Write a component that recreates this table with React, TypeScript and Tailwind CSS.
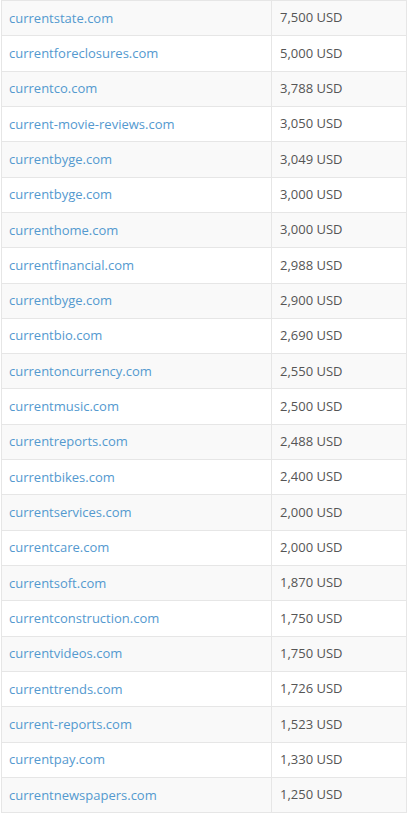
const rows: [string, string][] = [
  ["currentstate.com", "7,500 USD"],
  ["currentforeclosures.com", "5,000 USD"],
  ["currentco.com", "3,788 USD"],
  ["current-movie-reviews.com", "3,050 USD"],
  ["currentbyge.com", "3,049 USD"],
  ["currentbyge.com", "3,000 USD"],
  ["currenthome.com", "3,000 USD"],
  ["currentfinancial.com", "2,988 USD"],
  ["currentbyge.com", "2,900 USD"],
  ["currentbio.com", "2,690 USD"],
  ["currentoncurrency.com", "2,550 USD"],
  ["currentmusic.com", "2,500 USD"],
  ["currentreports.com", "2,488 USD"],
  ["currentbikes.com", "2,400 USD"],
  ["currentservices.com", "2,000 USD"],
  ["currentcare.com", "2,000 USD"],
  ["currentsoft.com", "1,870 USD"],
  ["currentconstruction.com", "1,750 USD"],
  ["currentvideos.com", "1,750 USD"],
  ["currenttrends.com", "1,726 USD"],
  ["current-reports.com", "1,523 USD"],
  ["currentpay.com", "1,330 USD"],
  ["currentnewspapers.com", "1,250 USD"],
];

export default function App() {
  return (
    <div className="w-[408px] h-[813px] overflow-hidden bg-white font-['Open_Sans',sans-serif] text-[13px]">
      <div className="mx-px border-x border-t border-[#e6e6e6]">
        {rows.map(([domain, price], i) => (
          <div
            key={i}
            className={`flex h-[35.32px] border-b border-[#e6e6e6] ${i % 2 === 0 ? "bg-[#f9f9f9]" : "bg-white"}`}
          >
            <div className="w-[270px] flex items-center pl-[7px] border-r border-[#e6e6e6]">
              <a className="text-[#5499cf] leading-none">{domain}</a>
            </div>
            <div className="flex-1 flex items-center pl-[8px] text-[#555]">
              {price}
            </div>
          </div>
        ))}
      </div>
    </div>
  );
}
